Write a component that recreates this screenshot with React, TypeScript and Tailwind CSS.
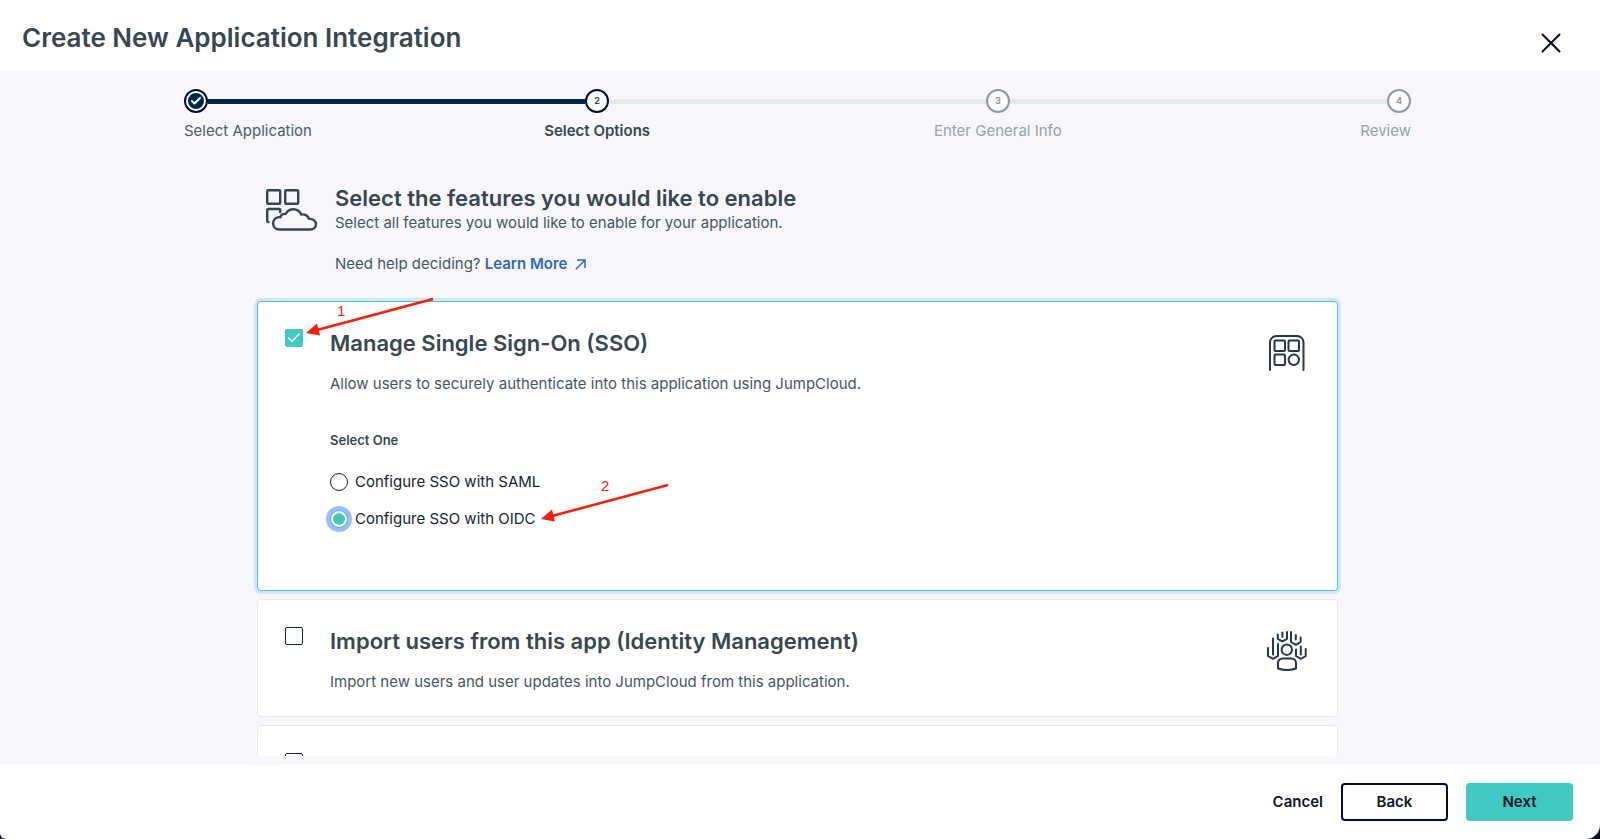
import { useState } from 'react'
import { Check, X } from 'lucide-react'
import clsx from 'clsx'

const steps = ['Select Application', 'Select Options', 'Enter General Info', 'Review']

function AppsCloudIcon() {
  return (
    <svg width="52" height="42" viewBox="0 0 52 42" fill="none" stroke="#37474f" strokeWidth="2.4" strokeLinecap="round" strokeLinejoin="round">
      <rect x="1.2" y="1.2" width="13" height="13.6" rx="1" />
      <rect x="19.2" y="1.2" width="13" height="13.6" rx="1" />
      <path d="M2.5 33H2.2a1 1 0 0 1-1-1V21a1 1 0 0 1 1-1h11a1 1 0 0 1 1 1v2" />
      <path d="M13 40.5a6.2 6.2 0 0 1-1.2-12.2c1.2-.3 2-.2 2.8-.1 0-2.2 2.2-3.7 5-3.2C21.400 21.8 24.2 20.2 27.3 20.2c4.2 0 6.8 2.4 7.900 5.300 4-.6 7.200 1.500 7.600 4.400 4-.5 7.200 1.900 7.200 5.400 0 3.100-2.500 5.200-5.700 5.200z" />
    </svg>
  )
}

function AppsGridIcon() {
  return (
    <svg width="36" height="36" viewBox="0 0 36 36" fill="none" stroke="#263845" strokeWidth="2" strokeLinecap="round" strokeLinejoin="round">
      <path d="M1 35V7.500a6.500 6.500 0 0 1 6.500-6.500h20.500a6.500 6.500 0 0 1 6.500 6.500V35" />
      <rect x="5.500" y="5.500" width="10.500" height="10.500" rx="1" />
      <rect x="19.500" y="5.500" width="10.500" height="10.500" rx="1" />
      <rect x="5.500" y="19.500" width="10.500" height="10.500" rx="1" />
      <circle cx="24.800" cy="24.800" r="5.200" />
    </svg>
  )
}

function UsersIcon() {
  return (
    <svg width="40" height="40" viewBox="0 0 40 40" fill="none" stroke="#263845" strokeWidth="2" strokeLinecap="round" strokeLinejoin="round">
      <circle cx="19.800" cy="18.700" r="5.200" />
      <path d="M11 37.500V32a4.500 4.500 0 0 1 4.500-4.500h9A4.500 4.500 0 0 1 29 32v5.500c-5.500 1.900-12.500 1.900-18 0z" />
      <path d="M1 17v8l5 2.800 5-2.800V13M6 7.500v16" />
      <path d="M29 18.500V25l4.800 2.800 4.900-2.800v-7M33.800 15.500v8" />
      <path d="M10.800 3.500v4.300l4.600 2.600L20 7.800V1M15.400 1.500V6" />
      <path d="M24 1v10l4.800 2.800 4.800-2.800V6.500M28.800 4v4.500" />
    </svg>
  )
}

function RedArrow({ className }: { className?: string }) {
  return (
    <svg className={className} width="130" height="42" viewBox="0 0 130 42" fill="none">
      <path d="M128 4L12 35" stroke="#fb1d05" strokeWidth="2.500" />
      <path d="M1 38L12 28.500l3 12z" fill="#fb1d05" />
    </svg>
  )
}

function Stepper({ current }: { current: number }) {
  return (
    <ol className="flex w-full max-w-[1227px] mx-auto">
      {steps.map((label, i) => {
        const first = i === 0
        const last = i === steps.length - 1
        const done = i < current
        const active = i === current

        return (
          <li
            key={label}
            className={clsx(
              'flex flex-col gap-[8px]',
              first || last ? 'flex-[213]' : 'flex-[401]',
              first ? 'items-start' : last ? 'items-end' : 'items-center'
            )}
          >
            <div className="flex w-full items-center">
              {!first && (
                <span className={clsx('h-[5px] flex-1', i <= current ? 'bg-[#022746]' : 'bg-[#e2e9e9]')} />
              )}
              <span
                className={clsx(
                  'flex size-6 items-center justify-center rounded-full border-2 bg-white text-[9px] font-bold',
                  done || active ? 'border-[#020b35] text-[#37474f]' : 'border-[#8f989c] text-[#8f989c]'
                )}
              >
                {done ? (
                  <span className="flex size-4 items-center justify-center rounded-full bg-[#022746]">
                    <Check className="size-3 text-white" strokeWidth={4} />
                  </span>
                ) : (
                  i + 1
                )}
              </span>
              {!last && (
                <span className={clsx('h-[5px] flex-1', done ? 'bg-[#022746]' : 'bg-[#e2e9e9]')} />
              )}
            </div>
            <span
              className={clsx(
                'text-[15px] leading-5',
                active ? 'font-semibold text-[#37474f]' : done ? 'text-[#4f5d65]' : 'text-[#9aa2a6]'
              )}
            >
              {label}
            </span>
          </li>
        )
      })}
    </ol>
  )
}

function FeatureCard({ id, title, description, icon, checked, onChange, children }: any) {
  return (
    <section
      className={clsx(
        'relative flex shrink-0 items-start rounded-[4px] border bg-white pt-[27px] pr-[30px] pl-[27px]',
        checked ? 'border-[#41c8c3] ring-3 ring-[#d5e4fc]' : 'border-[#e4eaeb]'
      )}
    >
      <span className="relative flex size-[18px] shrink-0">
        <input
          id={id}
          type="checkbox"
          aria-label={title ? undefined : 'Feature'}
          checked={checked}
          onChange={onChange}
          className="size-[18px] appearance-none rounded-[2px] border border-[#15252f] bg-white checked:border-[#41c8c3] checked:bg-[#41c8c3]"
        />
        {checked && (
          <Check className="pointer-events-none absolute inset-0 m-auto size-4 text-white" strokeWidth={2} />
        )}
      </span>

      <div className="ml-[27px] min-w-0 flex-1 pb-[24px]">
        <h3 className="text-[22px] leading-7 font-semibold text-[#37474f]">
          <label htmlFor={id}>{title}</label>
        </h3>
        <p className="mt-[17px] text-[15px] leading-5 text-[#47565f]">{description}</p>
        {children}
      </div>

      <div className="mt-[4px] flex size-10 items-center justify-center">{icon}</div>
    </section>
  )
}

export default function App() {
  const [sso, setSso] = useState(true)
  const [importUsers, setImportUsers] = useState(false)
  const [other, setOther] = useState(false)
  const [method, setMethod] = useState('oidc')

  const methods = [
    { value: 'saml', label: 'Configure SSO with SAML' },
    { value: 'oidc', label: 'Configure SSO with OIDC' }
  ]

  return (
    <div className="h-screen bg-[#0a0c20] font-['Inter',sans-serif]">
      <div className="flex h-full flex-col overflow-hidden rounded-br-[14px] rounded-bl-[6px] bg-white">

        {/* Header */}
        <header className="flex h-[71px] shrink-0 items-start justify-between pr-[32px] pl-[22px]">
          <h1 className="mt-[18px] text-[26px] leading-10 font-semibold text-[#37474f]">
            Create New Application Integration
          </h1>
          <button type="button" aria-label="Close" className="mt-[26px] text-[#020b20]">
            <X size={34} strokeWidth={1.4} />
          </button>
        </header>

        {/* Content */}
        <main className="flex min-h-0 flex-1 flex-col bg-[#f6f6fb] pt-[18px] pr-[5px] pb-[9px]">
          <Stepper current={1} />

          <div className="flex min-h-0 flex-1 flex-col overflow-hidden pt-[42px]">
            <div className="mx-auto flex w-full max-w-[1087px] flex-col px-[3px]">

              <div className="mb-[27px] flex items-start">
                <div className="mt-[6px] ml-[9px] w-[69px]">
                  <AppsCloudIcon />
                </div>
                <div>
                  <h2 className="text-[22px] leading-[30px] font-semibold text-[#37474f]">
                    Select the features you would like to enable
                  </h2>
                  <p className="text-[15px] leading-5 text-[#47565f]">
                    Select all features you would like to enable for your application.
                  </p>
                  <p className="mt-[21px] text-[15px] leading-5 text-[#47565f]">
                    Need help deciding?{' '}
                    <a href="#" className="inline-flex items-center gap-2 font-semibold text-[#2f66c8]">
                      Learn More
                      <svg width="11" height="11" viewBox="0 0 11 11" fill="none" stroke="currentColor" strokeWidth="1.500">
                        <path d="M.8 10.200L10 1M2 1h8v8" />
                      </svg>
                    </a>
                  </p>
                </div>
              </div>

              <div className="flex flex-col gap-2">
                <FeatureCard
                  id="sso"
                  title="Manage Single Sign-On (SSO)"
                  description="Allow users to securely authenticate into this application using JumpCloud."
                  icon={<AppsGridIcon />}
                  checked={sso}
                  onChange={() => setSso(!sso)}
                >
                  <fieldset className="mt-[36px] mb-[37px] flex flex-col items-start">
                    <legend className="text-[13px] leading-5 font-semibold text-[#37474f]">Select One</legend>
                    <div className="mt-[22px] flex flex-col gap-[17px]">
                      {methods.map((m) => (
                        <label key={m.value} className="flex items-center gap-[7px] text-[15px] leading-5 text-[#15252f]">
                          <input
                            type="radio"
                            name="method"
                            value={m.value}
                            checked={method === m.value}
                            onChange={() => setMethod(m.value)}
                            className="size-[18px] appearance-none rounded-full border border-[#15252f] bg-white checked:border-[#41c8c3] checked:bg-[#41c8c3] checked:bg-clip-content checked:p-[2px] checked:shadow-[inset_0_0_0_2px_#ffffff] checked:ring-4 checked:ring-[#9dbcfb]"
                          />
                          {m.label}
                        </label>
                      ))}
                    </div>
                  </fieldset>

                  {/* Callouts */}
                  <RedArrow className="pointer-events-none absolute top-[-7px] left-[47px]" />
                  <span className="absolute top-[-1px] left-[79px] font-['Liberation_Sans',sans-serif] text-[15px] leading-5 text-[#fb1d05]">1</span>
                  <RedArrow className="pointer-events-none absolute top-[179px] left-[282px]" />
                  <span className="absolute top-[174px] left-[343px] font-['Liberation_Sans',sans-serif] text-[15px] leading-5 text-[#fb1d05]">2</span>
                </FeatureCard>

                <FeatureCard
                  id="import"
                  title="Import users from this app (Identity Management)"
                  description="Import new users and user updates into JumpCloud from this application."
                  icon={<UsersIcon />}
                  checked={importUsers}
                  onChange={() => setImportUsers(!importUsers)}
                />

                <FeatureCard id="other" checked={other} onChange={() => setOther(!other)} />
              </div>
            </div>
          </div>
        </main>

        {/* Footer */}
        <footer className="flex h-[74px] shrink-0 items-center justify-end gap-[18px] pr-[27px] text-[15px] font-semibold text-[#0e1626]">
          <button type="button">Cancel</button>
          <button type="button" className="h-[38px] w-[107px] rounded-[4px] border-2 border-[#020b35]">
            Back
          </button>
          <button type="button" className="h-[38px] w-[107px] rounded-[4px] bg-[#41c8c3]">
            Next
          </button>
        </footer>
      </div>
    </div>
  )
}
